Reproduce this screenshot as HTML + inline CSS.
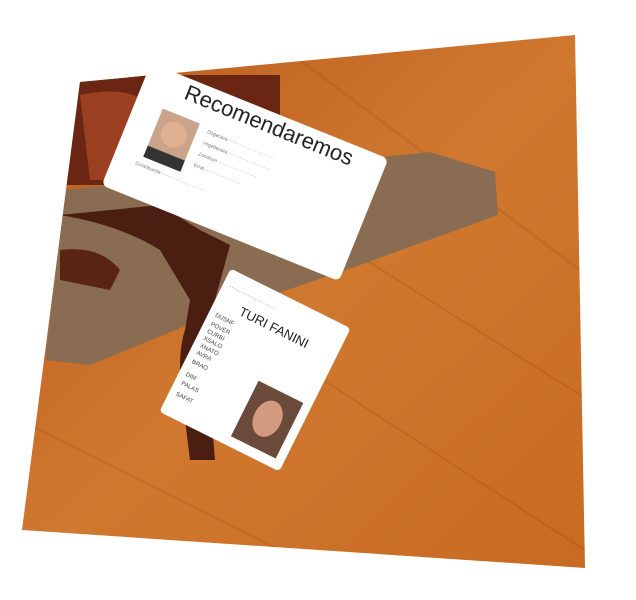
<!DOCTYPE html>
<html><head><meta charset="utf-8"><style>
html,body{margin:0;padding:0;background:#fff;width:636px;height:600px;overflow:hidden}
svg{display:block}
text{font-family:"Liberation Sans",sans-serif}
</style></head><body>
<svg width="636" height="600" viewBox="0 0 636 600">
<defs>
<linearGradient id="fl" x1="0" y1="0" x2="1" y2="1">
<stop offset="0" stop-color="#b85a1e"/><stop offset="0.5" stop-color="#d0782f"/><stop offset="1" stop-color="#c86a22"/>
</linearGradient>
<clipPath id="c"><polygon points="80,82 575,35 585,568 22,530"/></clipPath>
</defs>
<polygon points="80,82 575,35 585,568 22,530" fill="url(#fl)"/>
<g clip-path="url(#c)" opacity="0.2" stroke="#8a3e10" stroke-width="2">
<line x1="300" y1="60" x2="620" y2="300"/><line x1="200" y1="300" x2="600" y2="560"/>
<line x1="20" y1="420" x2="300" y2="560"/><line x1="350" y1="250" x2="620" y2="420"/>
</g>
<g clip-path="url(#c)">
<polygon points="65,190 430,152 495,172 498,215 360,265 200,320 90,365 45,360" fill="#8a6c52"/>
<rect x="60" y="75" width="220" height="110" fill="#6a2612"/>
<path d="M80 95 Q150 80 170 130 L170 180 L90 180 Z" fill="#9a4020"/>
<path d="M60 215 Q120 225 160 250 L190 300 L185 330 Q175 360 185 420 L190 460 L215 460 L210 400 Q200 340 215 300 L230 245 L200 230 L160 205 Z" fill="#4a1e10"/>
<path d="M60 250 Q100 245 120 270 L110 290 L60 280 Z" fill="#5a2412"/>
</g>
<g transform="translate(245,172) rotate(22)">
<rect x="-128" y="-66" width="256" height="132" rx="6" fill="#fff"/>
<text x="-85" y="-45" font-size="22" fill="#222">Recomendaremos</text>
<rect x="-100" y="-28" width="40" height="52" fill="#c9a48a"/>
<circle cx="-80" cy="-8" r="13" fill="#e0b090"/>
<rect x="-100" y="12" width="40" height="12" fill="#333"/>
<g fill="#777" font-size="5">
<text x="-50" y="-22">Dogecara ··············· ·············</text>
<text x="-50" y="-10">Vogeltecara ············· ·············</text>
<text x="-50" y="2">Zondrum ················ ········</text>
<text x="-50" y="14">Errat ············· ·········</text>
<text x="-105" y="34">Contribuinte ··················· ·········</text>
</g>
</g>
<g transform="translate(255,370) rotate(26.5)">
<rect x="-67" y="-80" width="134" height="160" rx="4" fill="#fff"/>
<text x="-40" y="-42" font-size="13" fill="#222">TURI FANINI</text>
<g fill="#444" font-size="6">
<text x="-60" y="-62">······· ·········· ·······</text>
<text x="-60" y="-30">DUSNF</text><text x="-60" y="-20">POVER</text>
<text x="-60" y="-12">CURBI</text><text x="-60" y="-4">XSALO</text>
<text x="-60" y="4">XNATO</text><text x="-60" y="12">AVRA</text>
<text x="-60" y="22">BRAO</text><text x="-60" y="36">DIM</text>
<text x="-60" y="46">PALAS</text><text x="-60" y="58">SAFAT</text>
</g>
<rect x="8" y="8" width="50" height="62" fill="#6a4a3a"/>
<ellipse cx="33" cy="38" rx="14" ry="19" fill="#d49a80"/>
</g>
</svg>
</body></html>
